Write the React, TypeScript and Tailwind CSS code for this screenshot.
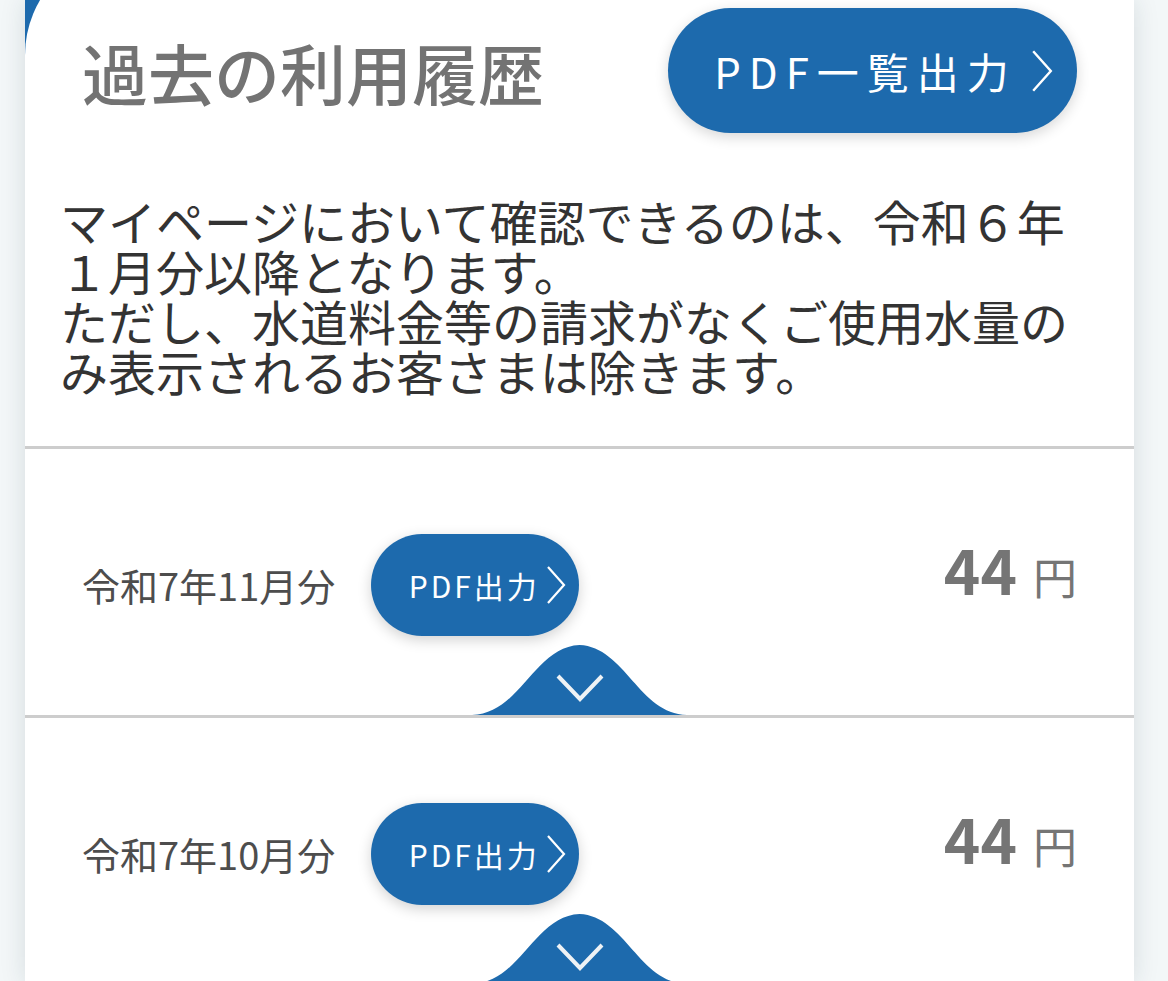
import React from 'react';

const BLUE = 'bg-[#1d6aad]';

function Chevron({ className }: { className?: string }) {
    return (
        <svg viewBox="0 0 20 40" className={className} fill="none" stroke="currentColor" strokeWidth="2.2" strokeLinecap="butt">
            <path d="M2 2 L18 20 L2 38" />
        </svg>
    );
}

function Bump() {
    return (
        <div className="relative w-[215px] h-[70px]">
            <svg viewBox="0 0 215 70" className="absolute inset-0 w-full h-full" preserveAspectRatio="none">
                <path d="M0 70 C 48 69, 62 2, 107.5 0 C 153 2, 167 69, 215 70 Z" fill="#1d6aad" />
            </svg>
            <svg viewBox="0 0 50 30" className="absolute left-[83px] top-[28px] w-[50px] h-[30px]" fill="none" stroke="#eef2f5" strokeWidth="4">
                <path d="M3 3 L25 26 L47 3" />
            </svg>
        </div>
    );
}

interface HistoryRow {
    label: string;
    amount: number;
}

const rows: HistoryRow[] = [
    { label: '令和7年11月分', amount: 44 },
    { label: '令和7年10月分', amount: 44 },
];

function Row({ row }: { row: HistoryRow }) {
    return (
        <div className="border-t-[3px] border-[#cdcdcd] flex flex-col">
            <div className="mt-[85px] h-[102px] flex items-center pl-[57px] pr-[57px]">
                <span className="text-[38px] text-[#4d4d4d] leading-none">{row.label}</span>
                <button className={`ml-[36px] h-[102px] w-[208px] rounded-full ${BLUE} text-white flex items-center justify-center gap-[6px] pl-[24px] shadow-[0_4px_14px_rgba(0,0,0,0.18)]`}>
                    <span className="text-[30px] tracking-[3px] leading-none">PDF出力</span>
                    <Chevron className="w-[20px] h-[42px]" />
                </button>
                <div className="ml-auto mb-[34px] flex items-baseline text-[#757575]">
                    <span className="text-[62px] font-bold leading-none">{row.amount}</span>
                    <span className="text-[44px] leading-none ml-[16px]">円</span>
                </div>
            </div>
            <div className="mt-[9px] flex justify-center">
                <Bump />
            </div>
        </div>
    );
}

export default function App() {
    return (
        <div
            className="min-h-screen bg-[#f3f7f8] pl-[25px] pr-[34px] overflow-hidden"
            style={{ fontFamily: '"Noto Sans CJK JP", "Noto Sans", sans-serif' }}
        >
            <div className={`${BLUE} overflow-hidden shadow-[0_0_24px_rgba(20,50,60,0.13)]`}>
                <div className="bg-white rounded-tl-[108px] -mt-[53px] pt-[61px]">
                    <div className="h-[125px] flex items-center justify-between pl-[57px] pr-[57px]">
                        <h1 className="text-[66px] font-medium text-[#737373] leading-none">過去の利用履歴</h1>
                        <button className={`h-[125px] w-[409px] rounded-full ${BLUE} text-white flex items-center justify-center gap-[14px] pl-[22px] shadow-[0_4px_14px_rgba(0,0,0,0.16)]`}>
                            <span className="text-[42px] tracking-[8px] leading-none">PDF一覧出力</span>
                            <Chevron className="w-[22px] h-[44px]" />
                        </button>
                    </div>
                    <p className="mt-[62px] pl-[35px] pr-[60px] pb-[51px] text-[48px] leading-[50px] text-[#333333]">
                        マイページにおいて確認できるのは、令和６年１月分以降となります。
                        <br />
                        ただし、水道料金等の請求がなくご使用水量のみ表示されるお客さまは除きます。
                    </p>
                    {rows.map(row => (
                        <Row key={row.label} row={row} />
                    ))}
                </div>
            </div>
        </div>
    );
}
